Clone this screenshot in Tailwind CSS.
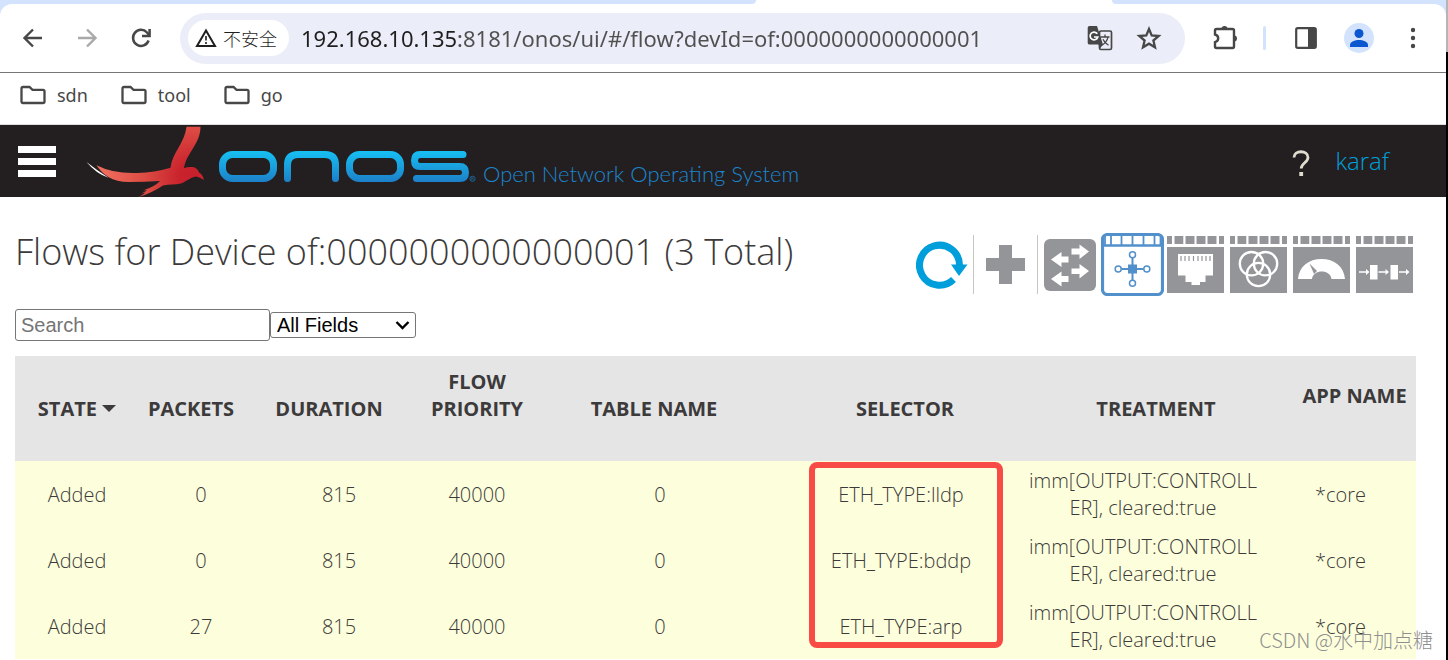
<!DOCTYPE html>
<html lang="en">
<head>
    <meta charset="UTF-8">
    <meta name="viewport" content="width=device-width, initial-scale=1.0">
    <title>ONOS - Flows</title>
    <script src="https://cdn.jsdelivr.net/npm/@tailwindcss/browser@4"></script>
</head>
<body class="relative flex h-screen overflow-hidden bg-white font-['Open_Sans',sans-serif]">
    <div class="min-w-0 flex-1">

        <!-- Browser toolbar -->
        <div class="bg-[#d3e3fd]">
            <div class="flex h-1 bg-white">
                <div class="flex-1 rounded-br-lg bg-[#d3e3fd]"></div>
                <div class="w-[356px]"></div>
                <div class="w-[334px] rounded-bl-lg bg-[#d3e3fd]"></div>
            </div>
            <div class="flex h-[68px] items-center rounded-t-xl bg-white pr-[23px] pl-[18px] text-[#474747]">
                <button class="flex size-[30px] items-center justify-center" aria-label="Back">
                    <svg class="size-7" viewBox="0 0 28 28" fill="none" stroke="currentColor" stroke-width="2.4"><path d="M23 14H6M14 5.500L5.500 14l8.500 8.500"/></svg>
                </button>
                <button class="ml-6 flex size-[30px] items-center justify-center text-[#a9a9a9]" aria-label="Forward">
                    <svg class="size-7" viewBox="0 0 28 28" fill="none" stroke="currentColor" stroke-width="2.400"><path d="M5 14h17M14 5.500l8.500 8.500-8.500 8.500"/></svg>
                </button>
                <button class="ml-6 flex size-[30px] items-center justify-center" aria-label="Reload">
                    <svg class="size-7" viewBox="0 0 28 28" fill="none" stroke="currentColor" stroke-width="2.500"><path d="M21.600 16.500A8 8 0 1 1 20 8.500l2 2.500"/><path d="M15 12h7.600V5"/></svg>
                </button>
                <div class="ml-6 flex h-[51px] flex-1 items-center rounded-full bg-[#ebeef8] pr-5 pl-2">
                    <button class="flex h-9 items-center gap-1.5 rounded-full bg-white pr-3 pl-[7px] text-lg text-[#1f1f1f]">
                        <svg class="size-[22px]" viewBox="0 0 22 22" fill="none" stroke="currentColor" stroke-width="2"><path d="M11 3.500L20 19H2z"/><path d="M11 9v4.500M11 15v2" stroke-width="1.600"/></svg>
                        <span class="font-['Noto_Sans_CJK_SC',sans-serif] font-light">不安全</span>
                    </button>
                    <input id="address" type="text" aria-label="Address" class="ml-3 min-w-0 flex-1 bg-[linear-gradient(to_right,#1f1f1f_158px,#505050_158px)] bg-clip-text font-['Noto_Sans',sans-serif] text-[22px] text-transparent outline-none" value="192.168.10.135:8181/onos/ui/#/flow?devId=of:0000000000000001">
                    <button class="mr-5" aria-label="Translate">
                        <svg class="size-[26px]" viewBox="0 0 26 26"><rect x="12.500" y="6" width="12" height="18.500" rx="1.500" fill="none" stroke="#474747" stroke-width="1.700"/><path fill="#474747" d="M2.500 1H10l6 18.500-3 4-1.500-4h-9A1.800 1.800 0 0 1 .7 18V2.800A1.800 1.800 0 0 1 2.500 1z"/><path d="M10.300 8.800A3.900 3.900 0 1 0 10.800 12H7" fill="none" stroke="#fff" stroke-width="1.700"/><path d="M13.500 12h9M18 9.500V12m3 .2c-1 4-3 6.300-6 8m1-6c1 2.500 3 4.500 5.500 6" fill="none" stroke="#474747" stroke-width="1.300"/></svg>
                    </button>
                    <button aria-label="Bookmark this page">
                        <svg class="size-8" viewBox="0 0 32 32" fill="none" stroke="#474747" stroke-width="2.300"><path d="M16 7l2.700 6.400 7 .6-5.300 4.500 1.600 6.800-6-3.600-6 3.600 1.600-6.800L6.300 14l7-.6z"/></svg>
                    </button>
                </div>
                <button class="ml-[26px]" aria-label="Extensions">
                    <svg class="size-7" viewBox="0 0 28 28"><path d="M4 6.500q0-1.500 1.500-1.500h16q1.500 0 1.500 1.500v16q0 1.500-1.500 1.500h-16Q4 24 4 22.500v-4.300q3.200-.8 3.200-3.900T4 10.500z" fill="none" stroke="#474747" stroke-width="2.400"/><path d="M10.500 5a3 3 0 0 1 6 0zM23 11.500a3 3 0 0 1 0 6z" fill="#474747"/></svg>
                </button>
                <div class="mx-6 h-6 w-[3px] rounded-full bg-[#d3e3fd]"></div>
                <button class="ml-1" aria-label="Side panel">
                    <svg class="size-6" viewBox="0 0 24 24"><rect x="2.200" y="2.200" width="19.600" height="19.600" rx="1.500" fill="none" stroke="#474747" stroke-width="2.200"/><path d="M14 2h8v20h-8z" fill="#474747"/></svg>
                </button>
                <button class="ml-[26px] flex size-[30px] items-center justify-center rounded-full bg-[#d3e3fd]" aria-label="Profile">
                    <svg class="size-[18px]" viewBox="0 0 18 18" fill="#0b57d0"><circle cx="9" cy="4.500" r="4.500"/><path d="M0 18v-2c0-3.500 5-5 9-5s9 1.500 9 5v2z"/></svg>
                </button>
                <button class="ml-[29px]" aria-label="Menu">
                    <svg class="h-6 w-5" viewBox="0 0 20 24" fill="#474747"><circle cx="10" cy="4" r="2.200"/><circle cx="10" cy="12" r="2.200"/><circle cx="10" cy="20" r="2.200"/></svg>
                </button>
            </div>
        </div>

        <!-- Bookmarks -->
        <nav class="flex h-[53px] items-center gap-[33px] border-t border-b border-t-[#767676] border-b-[#dedede] px-5 pb-2 font-['Noto_Sans',sans-serif] text-lg text-[#474747]">
            <a href="#" class="flex items-center gap-[11px]"><svg class="h-5 w-[26px]" viewBox="0 0 26 20" fill="none" stroke="currentColor" stroke-width="2.300"><path d="M3 2h6.500l3 2.800H23q1.500 0 1.500 1.500V16.500q0 1.500-1.500 1.500H3q-1.500 0-1.500-1.500v-13Q1.500 2 3 2z"/></svg>sdn</a>
            <a href="#" class="flex items-center gap-[11px]"><svg class="h-5 w-[26px]" viewBox="0 0 26 20" fill="none" stroke="currentColor" stroke-width="2.300"><path d="M3 2h6.500l3 2.800H23q1.500 0 1.500 1.500V16.500q0 1.500-1.500 1.500H3q-1.500 0-1.500-1.500v-13Q1.500 2 3 2z"/></svg>tool</a>
            <a href="#" class="flex items-center gap-[11px]"><svg class="h-5 w-[26px]" viewBox="0 0 26 20" fill="none" stroke="currentColor" stroke-width="2.300"><path d="M3 2h6.500l3 2.800H23q1.500 0 1.500 1.500V16.500q0 1.500-1.500 1.500H3q-1.500 0-1.500-1.500v-13Q1.500 2 3 2z"/></svg>go</a>
        </nav>

        <!-- ONOS masthead -->
        <header class="flex h-[72px] items-center bg-[#231f20] pr-[57px] pl-[18px]">
            <button class="flex flex-col gap-[5px]" aria-label="Toggle navigation">
                <span class="block h-[7px] w-[38px] bg-white"></span>
                <span class="block h-[7px] w-[38px] bg-white"></span>
                <span class="block h-[7px] w-[38px] bg-white"></span>
            </button>
            <svg class="ml-[29px] h-[72px] w-[392px]" viewBox="85 125 392 72" role="img" aria-label="ONOS">
                <defs>
                    <radialGradient id="bird" cx="192" cy="176" r="85" gradientUnits="userSpaceOnUse">
                        <stop offset="0" stop-color="#c8202d"/>
                        <stop offset=".15" stop-color="#c9232d"/>
                        <stop offset=".55" stop-color="#dd4b43"/>
                        <stop offset="1" stop-color="#ee6a5b"/>
                    </radialGradient>
                    <linearGradient id="word" x1="0" y1="151" x2="0" y2="182" gradientUnits="userSpaceOnUse">
                        <stop offset="0" stop-color="#16c0f3"/>
                        <stop offset="1" stop-color="#1d80c8"/>
                    </linearGradient>
                </defs>
                <path fill="#fff" d="M86.500 162q10 8 22 15.800-12-3.800-22-15.800z"/>
                <path fill="url(#bird)" d="M96.500 165.300q17 8.700 41 7.700 17-.5 33-5.300c2-16 14-24 16-41H200.500c0 17-14 26-16.500 41.500q3-1.300 7-1.200c4 0 7 2 8 5.500q4 2 5 7.500-4-3-8-3.500c-6 1-10 5-15 7-6 1.500-12 .7-18 2q-12 8-24.500 11.500 4-2 7-4.500l-4.500 1q4-1.500 6-3.500l-4 .5q12-4 17-9.500-16 1-31 1c-17 0-26-7-32.500-16.700z"/>
                <g fill="none" stroke="url(#word)" stroke-width="7" stroke-linecap="round">
                    <rect x="222.500" y="154.500" width="51" height="24" rx="10"/>
                    <path d="M287.500 178.500V165q0-10.500 10.500-10.500h27q10.500 0 10.500 10.500v13.500"/>
                    <rect x="349.500" y="154.500" width="51" height="24" rx="10"/>
                    <path d="M463 154.500h-43q-5.500 0-5.500 6t5.500 6h39.500q6 0 6 6t-6 6H416.500"/>
                </g>
                <circle cx="472.500" cy="178.800" r="2.600" fill="none" stroke="#1d70ad" stroke-width=".8"/>
                <path d="M471.700 180.500v-3.200h1q1.100.8 0 1.600h-1m1 0l.9 1.600" fill="none" stroke="#1d70ad" stroke-width=".6"/>
            </svg>
            <span class="mt-[26px] ml-1.5 font-[Lato,sans-serif] text-[22px] leading-7 font-light text-[#1b86cf]">Open Network Operating System</span>
            <button class="mt-1 ml-auto" aria-label="Help">
                <svg class="h-7 w-5" viewBox="0 0 20 28"><path d="M3 8.500C3 .8 17 .8 17 8.500c0 5-6.800 5.500-6.800 11" fill="none" stroke="#deddd0" stroke-width="2.800"/><path d="M8.300 23h3.800v4H8.300z" fill="#deddd0"/></svg>
            </button>
            <a href="#" class="ml-6 text-2xl font-light text-[#009fdb]">karaf</a>
        </header>

        <main class="pt-9 pr-[30px] pl-[15px]">
            <div class="flex justify-between">
                <h1 class="text-4xl leading-[38px] font-light text-[#3c3a3a]">Flows for Device of:0000000000000001 (3 Total)</h1>
                <div class="flex items-center">
                    <button class="flex size-[63px] items-center justify-center" aria-label="Toggle auto refresh">
                        <svg class="h-12 w-[52px]" viewBox="0 0 52 48"><path d="M37.500 38.500A20 20 0 1 1 43.500 24" fill="none" stroke="#009fdb" stroke-width="7"/><path d="M35 23.500h16.500L43 35z" fill="#009fdb"/></svg>
                    </button>
                    <div class="h-[59px] w-px bg-[#c7c7c0]"></div>
                    <button class="flex size-[63px] items-center justify-center" aria-label="Show brief">
                        <svg class="size-[39px]" viewBox="0 0 39 39" fill="#939598"><path d="M13 0h13v13h13v13H26v13H13V26H0V13h13z"/></svg>
                    </button>
                    <div class="h-[59px] w-px bg-[#c7c7c0]"></div>
                    <button class="flex size-[63px] items-center justify-center" aria-label="Show device table">
                        <svg class="size-[52px]" viewBox="0 0 52 52"><rect width="52" height="52" rx="6" fill="#939598"/><g fill="#fff"><path d="M27.500 9.500h8v-4L45 12.500l-9.500 7.500v-4.500h-8zM27.500 29.500h8v-4.500L45 32l-9.500 7.500v-4.500h-8zM24.500 17.500h-7V13L7 20.500l10.500 7.500v-4.500h7zM24.500 37h-7v-4.500L7 40l10.500 7.500v-4.500h7z"/></g></svg>
                    </button>
                    <button class="flex size-[63px] items-center justify-center rounded-md" aria-label="Flow view">
                        <svg class="size-[63px]" viewBox="0 0 63 63" fill="none" stroke="#5290cc"><rect x="1.500" y="1.500" width="60" height="60" rx="5" stroke-width="3.200"/><path d="M3 12.500h57" stroke-width="2.400"/><path d="M4 3v9M10 3v9M20.500 3v9M31.500 3v9M42.500 3v9M53.500 3v9M59.500 3v9" stroke-width="1.800"/><path d="M31.500 25v22M20.500 36h22" stroke-width="2"/><rect x="27" y="31.500" width="9" height="9" fill="#5290cc" stroke="none"/><g fill="#fff" stroke-width="1.500"><circle cx="31.500" cy="21.700" r="3"/><circle cx="31.500" cy="50.300" r="3"/><circle cx="17.200" cy="36" r="3"/><circle cx="45.800" cy="36" r="3"/></g></svg>
                    </button>
                    <button class="flex size-[63px] items-center justify-center" aria-label="Show port view">
                        <svg class="size-[57px]" viewBox="0 0 57 57"><path fill="#939598" d="M0 0h5v8H0zM7.500 0h8.800v8H7.500zM18.500 0h9v8h-9zM29.500 0h9v8h-9zM40.500 0h9v8h-9zM52 0h5v8h-5zM0 11h57v46H0z"/><path fill="#fff" d="M11 18h35v21.500h-7.500V46H33v3h-8.500v-3h-6v-6.500H11z"/><path d="M14 20v5M18 20v5M22 20v5M26.500 20v5M31 20v5M35 20v5M39 20v5M43 20v5" stroke="#939598" stroke-width="1.200"/></svg>
                    </button>
                    <button class="flex size-[63px] items-center justify-center" aria-label="Show group view">
                        <svg class="size-[57px]" viewBox="0 0 57 57"><path fill="#939598" d="M0 0h5v8H0zM7.500 0h8.800v8H7.500zM18.500 0h9v8h-9zM29.500 0h9v8h-9zM40.500 0h9v8h-9zM52 0h5v8h-5zM0 11h57v46H0z"/><g fill="none" stroke="#fff" stroke-width="2.300"><circle cx="21.500" cy="27.700" r="11.700"/><circle cx="35.500" cy="27.700" r="11.700"/><circle cx="28.500" cy="38.500" r="11.700"/></g></svg>
                    </button>
                    <button class="flex size-[63px] items-center justify-center" aria-label="Show meter view">
                        <svg class="size-[57px]" viewBox="0 0 57 57"><path fill="#939598" d="M0 0h5v8H0zM7.500 0h8.800v8H7.500zM18.500 0h9v8h-9zM29.500 0h9v8h-9zM40.500 0h9v8h-9zM52 0h5v8h-5zM0 11h57v46H0z"/><path fill="#fff" d="M5 43C6 30 16 23 28.500 23S51 30 52 43H38.500c-1-10-18.500-10-19.500 0z"/><path fill="#939598" d="M16.500 27.500l7.500 7.500-3 3z"/></svg>
                    </button>
                    <button class="flex size-[63px] items-center justify-center" aria-label="Show pipeconf view">
                        <svg class="size-[57px]" viewBox="0 0 57 57"><path fill="#939598" d="M0 0h5v8H0zM7.500 0h8.800v8H7.500zM18.500 0h9v8h-9zM29.500 0h9v8h-9zM40.500 0h9v8h-9zM52 0h5v8h-5zM0 11h57v46H0z"/><g fill="#fff"><path d="M14 29h7.500v14.500H14zM34.500 29H42v14.500h-7.500z"/><path d="M3 35.300h7V33l3.500 3-3.500 3v-2.300H3zM22.500 35.300h7V33l3.500 3-3.500 3v-2.300h-7zM43 35.300h7V33l3.500 3-3.500 3v-2.300h-7z"/></g></svg>
                    </button>
                </div>
            </div>

            <div class="mt-[13px] flex items-center font-['Liberation_Sans',sans-serif] text-xl">
                <input id="search" type="search" placeholder="Search" aria-label="Search" class="h-8 w-[255px] rounded-[3px] border border-[#767676] px-[5px] placeholder:text-[#757575]">
                <div class="relative">
                    <select id="field" aria-label="Search field" class="block h-[26px] w-[146px] appearance-none rounded-[3px] border border-[#767676] bg-white pl-1.5 leading-6 text-black">
                        <option>All Fields</option>
                        <option>State</option>
                        <option>Packets</option>
                        <option>Duration</option>
                    </select>
                    <svg class="pointer-events-none absolute top-2 right-1.5 h-3 w-[15px]" viewBox="0 0 15 12" fill="none" stroke="#000" stroke-width="2.400"><path d="M1.500 2l6 6 6-6"/></svg>
                </div>
            </div>

            <div class="relative mt-[15px]">
                <table class="w-full table-fixed text-xl leading-[27px] text-[#3c3a3a]">
                    <colgroup>
                        <col class="w-[124px]"><col class="w-[104px]"><col class="w-[172px]"><col class="w-[124px]"><col class="w-[230px]"><col class="w-[272px]"><col class="w-[230px]"><col>
                    </colgroup>
                    <thead>
                        <tr class="h-[105px] bg-[#e5e5e5]">
                            <th class="font-bold">STATE <svg class="mb-1 inline h-[7px] w-[14px]" viewBox="0 0 14 7" fill="#3c3a3a"><path d="M0 0h14L7 7z"/></svg></th>
                            <th class="font-bold">PACKETS</th>
                            <th class="font-bold">DURATION</th>
                            <th class="pb-[27px] font-bold">FLOW<br>PRIORITY</th>
                            <th class="font-bold">TABLE NAME</th>
                            <th class="font-bold">SELECTOR</th>
                            <th class="font-bold">TREATMENT</th>
                            <th class="pb-[27px] pl-[22px] font-bold">APP NAME</th>
                        </tr>
                    </thead>
                </table>
                <table class="w-full table-fixed text-center text-xl leading-[27px] font-light text-[#3c3a3a]" aria-label="Flows">
                    <colgroup>
                        <col class="w-[124px]"><col class="w-[124px]"><col class="w-[152px]"><col class="w-[124px]"><col class="w-[242px]"><col class="w-[240px]"><col class="w-[244px]"><col>
                    </colgroup>
                    <tbody>
                        <tr class="h-[66px] bg-[#fdffdc]">
                            <td>Added</td><td>0</td><td>815</td><td>40000</td><td>0</td><td>ETH_TYPE:lldp</td><td>imm[OUTPUT:CONTROLL<br>ER], cleared:true</td><td>*core</td>
                        </tr>
                        <tr class="h-[66px] bg-[#fdffdc]">
                            <td>Added</td><td>0</td><td>815</td><td>40000</td><td>0</td><td>ETH_TYPE:bddp</td><td>imm[OUTPUT:CONTROLL<br>ER], cleared:true</td><td>*core</td>
                        </tr>
                        <tr class="h-[66px] bg-[#fdffdc]">
                            <td>Added</td><td>27</td><td>815</td><td>40000</td><td>0</td><td>ETH_TYPE:arp</td><td>imm[OUTPUT:CONTROLL<br>ER], cleared:true</td><td>*core</td>
                        </tr>
                    </tbody>
                </table>
                <!-- Highlight round the selector column -->
                <div class="pointer-events-none absolute top-[106px] left-[794px] h-[186px] w-[194px] rounded-lg border-[6px] border-[#f94b46]"></div>
            </div>
        </main>
    </div>

    <!-- Window edge -->
    <div class="flex w-0.5 flex-col">
        <div class="h-[52px] bg-[#b5b5b5]"></div>
        <div class="flex-1 bg-black"></div>
    </div>

    <div class="pointer-events-none absolute right-[15px] bottom-1 font-['Noto_Sans_CJK_SC',sans-serif] text-xl leading-8 font-light text-[#8f8f8f]">CSDN @水中加点糖</div>
</body>
</html>
